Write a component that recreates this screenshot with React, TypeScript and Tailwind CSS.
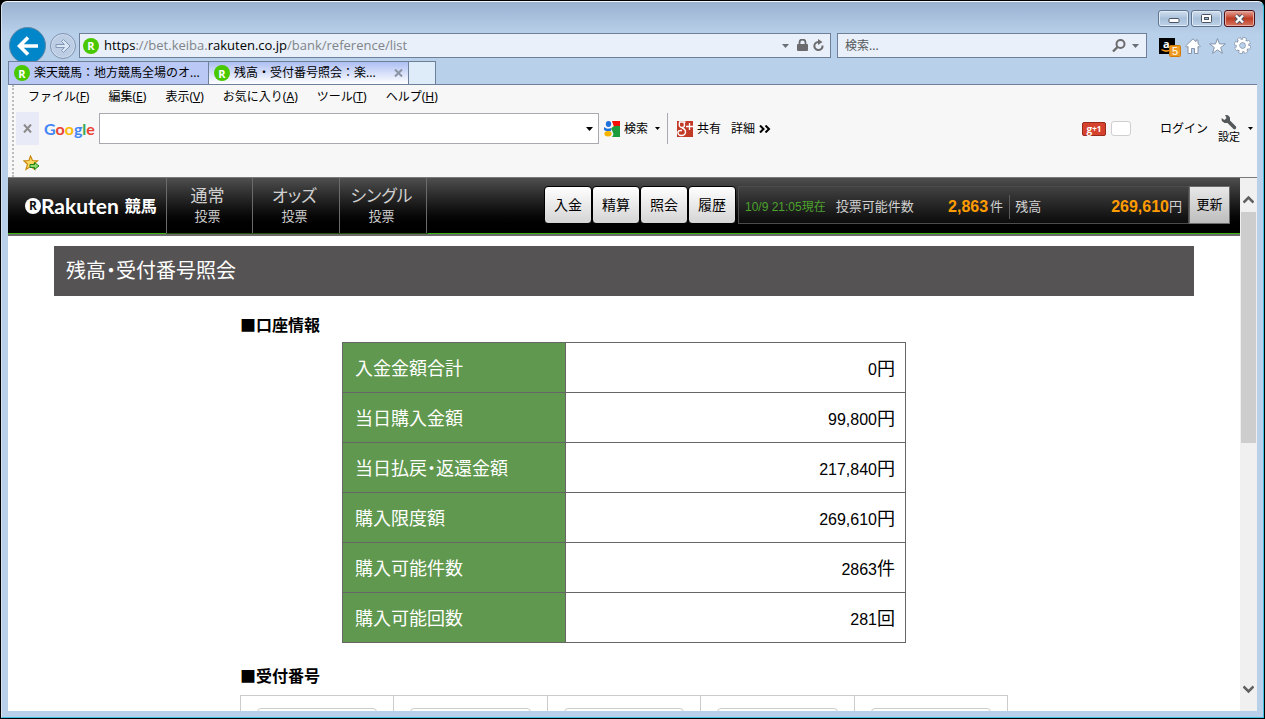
import React, { useState } from 'react';

const MENUS = [
  { label: 'ファイル', key: 'F' },
  { label: '編集', key: 'E' },
  { label: '表示', key: 'V' },
  { label: 'お気に入り', key: 'A' },
  { label: 'ツール', key: 'T' },
  { label: 'ヘルプ', key: 'H' },
];

const NAV_ITEMS = ['通常', 'オッズ', 'シングル'];

const ACTIONS = ['入金', '精算', '照会', '履歴'];

const ACCOUNT_ROWS = [
  { label: '入金金額合計', value: '0', unit: '円' },
  { label: '当日購入金額', value: '99,800', unit: '円' },
  { label: '当日払戻・返還金額', value: '217,840', unit: '円' },
  { label: '購入限度額', value: '269,610', unit: '円' },
  { label: '購入可能件数', value: '2863', unit: '件' },
  { label: '購入可能回数', value: '281', unit: '回' },
];

function Caret({ className }: { className: string }) {
  return (
    <svg viewBox="0 0 7 4" className={`h-1 w-[7px] shrink-0 ${className}`} fill="currentColor">
      <path d="M0 0h7L3.5 4z" />
    </svg>
  );
}

function SiteIcon() {
  return (
    <span className="flex size-4 shrink-0 items-center justify-center rounded-full bg-[#49c800] font-['Open_Sans','Noto_Sans',sans-serif] text-[11px] leading-none font-bold text-white">
      R
    </span>
  );
}

function WindowButtons() {
  const base =
    'flex h-[17px] w-[31px] items-center justify-center rounded-[3px] border border-[#5f7491] bg-linear-to-b from-[#d3e0ef] via-[#a9c0da] to-[#bed3ea] shadow-[inset_0_0_0_1px_#e2ecf7]';
  return (
    <div className="mr-0.5 flex h-[31px] shrink-0 justify-end gap-0.5 pt-2">
      <button type="button" aria-label="最小化" className={base}>
        <svg width="12" height="9" viewBox="0 0 12 9">
          <rect x="1" y="4.5" width="10" height="4" rx="1" fill="#fff" stroke="#4a5361" />
        </svg>
      </button>
      <button type="button" aria-label="最大化" className={base}>
        <svg width="11" height="9" viewBox="0 0 11 9">
          <rect x="0.5" y="0.5" width="10" height="8" rx="1" fill="#fff" stroke="#4a5361" />
          <rect x="3.5" y="3.5" width="4" height="2" fill="#9db4d0" stroke="#4a5361" />
        </svg>
      </button>
      <button
        type="button"
        aria-label="閉じる"
        className="flex h-[17px] w-[31px] items-center justify-center rounded-[3px] border border-[#4d0f15] bg-linear-to-b from-[#e5a398] via-[#bd3a23] to-[#d57560] shadow-[inset_0_0_0_1px_#e6b0a6]"
      >
        <svg width="13" height="10" viewBox="0 0 13 10">
          <path d="M3 1.5l7 7M10 1.5l-7 7" stroke="#535666" strokeWidth="4.4" />
          <path d="M3 1.5l7 7M10 1.5l-7 7" stroke="#fff" strokeWidth="2.4" />
        </svg>
      </button>
    </div>
  );
}

function AddressRow() {
  return (
    <div className="flex h-7 shrink-0 items-start">
      <button
        type="button"
        aria-label="戻る"
        className="-mt-1.5 ml-px flex size-[37px] shrink-0 items-center justify-center rounded-full border border-[#5f86a8] bg-[#0086c9]"
      >
        <svg width="22" height="20" viewBox="0 0 22 20" fill="none" stroke="#fff" strokeWidth="3.6">
          <path d="M21 10H3M11 1.5L2.5 10l8.500 8.500" />
        </svg>
      </button>
      <button
        type="button"
        aria-label="進む"
        className="ml-1 flex size-[26px] shrink-0 items-center justify-center rounded-full border border-[#7f93b0] bg-[#bccde4] shadow-[inset_0_0_0_1px_#d3e0f0]"
      >
        <svg width="16" height="14" viewBox="0 0 16 14">
          <path d="M1 5.500h8.500L6.500 2.500l2-2L15 7l-6.500 6.500-2-2 3-3H1z" fill="#dbe7f5" stroke="#8297b5" />
        </svg>
      </button>
      <div className="ml-[3px] flex h-[25px] flex-1 items-center border border-[#6d7f99] bg-[#e9f0fa] pr-1.5 pl-[3px]">
        <SiteIcon />
        <p className="ml-[5px] flex-1 font-['Open_Sans','Noto_Sans',sans-serif] text-[13px] whitespace-nowrap text-[#808488]">
          <span className="text-black">https</span>://bet.keiba.<span className="text-black">rakuten.co.jp</span>
          /bank/reference/list
        </p>
        <Caret className="text-[#6b6f75]" />
        <svg width="11" height="13" viewBox="0 0 11 13" className="ml-2" fill="#6b6b6e">
          <rect x="0" y="5" width="11" height="7" rx="1" />
          <path d="M2.500 6V3.500a3 3 0 016 0V6" fill="none" stroke="#6b6b6e" strokeWidth="1.800" />
        </svg>
        <svg width="11" height="13" viewBox="0 0 11 13" className="ml-[5px]" fill="none">
          <path d="M9.500 6.500a4.100 4.100 0 11-4-3.600" stroke="#6b6b6e" strokeWidth="2" />
          <path d="M5 0v6L9.500 3z" fill="#6b6b6e" />
        </svg>
      </div>
      <div className="ml-1.5 flex h-[25px] w-[310px] items-center border border-[#6d7f99] bg-[#e9f0fa] px-[7px]">
        <input
          aria-label="検索"
          placeholder="検索..."
          className="min-w-0 flex-1 bg-transparent text-xs outline-none placeholder:text-[#55585c]"
        />
        <svg width="14" height="14" viewBox="0 0 14 14" fill="none" stroke="#6b6b6e" strokeWidth="2">
          <circle cx="8.500" cy="5" r="4" />
          <path d="M5.500 8L1 12.500" strokeWidth="2.400" />
        </svg>
        <Caret className="ml-1.5 text-[#6b6f75]" />
      </div>
      <div className="mr-1.5 ml-3 flex h-[25px] items-center gap-2">
        <button type="button" aria-label="Amazon" className="-mr-1 size-[22px]">
          <svg width="22" height="22" viewBox="0 0 22 22">
            <rect x="0" y="3" width="16" height="16" fill="#000" />
            <path d="M2.500 14.500q5 3.500 10-.5" fill="none" stroke="#f79a1e" strokeWidth="1.500" />
            <text x="4" y="13" fill="#fff" fontSize="11" fontWeight="700" fontFamily="Open Sans, sans-serif">
              a
            </text>
            <rect x="10.500" y="10.500" width="11" height="11" rx="1" fill="#ee9a20" stroke="#d27a08" />
            <text x="13" y="20" fill="#fff" fontSize="11" fontFamily="Liberation Sans, sans-serif">
              5
            </text>
          </svg>
        </button>
        <button type="button" aria-label="ホーム">
          <svg width="16" height="16" viewBox="0 0 16 16" fill="#fff" stroke="#8594aa" strokeWidth="1">
            <path d="M8 .8L.6 8l1.200 1.300 1.200-.9V15.500h3.500v-5h3v5H13V8.400l1.200.9L15.400 8 13 5.700V2h-2v1.700z" />
          </svg>
        </button>
        <button type="button" aria-label="お気に入り">
          <svg width="17" height="16" viewBox="0 0 17 16" fill="#fff" stroke="#8594aa" strokeWidth="1">
            <path d="M8.500.6l2 5.300h5.900l-4.700 3.600 1.800 5.900-5-3.500-5 3.500 1.800-5.900L.6 5.900h5.900z" />
          </svg>
        </button>
        <button type="button" aria-label="ツール">
          <svg width="17" height="17" viewBox="0 0 17 17" fill="none">
            <circle cx="8.500" cy="8.500" r="6.700" stroke="#8594aa" strokeWidth="3.400" strokeDasharray="3.600 1.660" />
            <circle cx="8.500" cy="8.500" r="4.700" stroke="#8594aa" strokeWidth="4.400" />
            <circle cx="8.500" cy="8.500" r="6.600" stroke="#fff" strokeWidth="2.400" strokeDasharray="2.600 2.580" strokeDashoffset="-.5" />
            <circle cx="8.500" cy="8.500" r="4.600" stroke="#fff" strokeWidth="2.800" />
          </svg>
        </button>
      </div>
    </div>
  );
}

function TabRow() {
  return (
    <div className="relative flex h-6 shrink-0 border-b border-[#6d7f99] text-xs">
      <button
        type="button"
        className="flex w-[200px] items-center gap-1 border-t border-l border-[#6d7f99] bg-[#b9c8f4] pl-[5px] whitespace-nowrap"
      >
        <SiteIcon />
        楽天競馬：地方競馬全場のオ...
      </button>
      <div className="flex w-[201px] items-center border border-b-0 border-[#6d7f99] bg-linear-to-b from-[#aebff2] to-white px-[5px]">
        <button type="button" className="flex flex-1 items-center gap-1 whitespace-nowrap">
          <SiteIcon />
          残高・受付番号照会：楽...
        </button>
        <button type="button" aria-label="タブを閉じる">
          <svg width="9" height="8" viewBox="0 0 9 8" stroke="#8b93a3" strokeWidth="2">
            <path d="M1 .5l7 7M8 .5l-7 7" />
          </svg>
        </button>
      </div>
      <button
        type="button"
        aria-label="新しいタブ"
        className="w-[27px] border-t border-r border-[#6d7f99] bg-[#deebf9]"
      />
    </div>
  );
}

function GoogleLogo() {
  return (
    <span className="ml-[5px] w-[51px] font-[Lato,'Open_Sans',sans-serif] text-base font-bold">
      <span className="text-[#4285f4]">G</span>
      <span className="text-[#ea4335]">o</span>
      <span className="text-[#fbbc05]">o</span>
      <span className="text-[#4285f4]">g</span>
      <span className="text-[#34a853]">l</span>
      <span className="text-[#ea4335]">e</span>
    </span>
  );
}

function Toolbars() {
  return (
    <div className="h-[92px] shrink-0 bg-[#f7f7f7] pl-1 text-xs">
      <div className="h-full border-l-2 border-dotted border-[#bdbdbd]">
        <div className="flex h-[27px] items-start gap-[19px] pt-1 pl-3.5 leading-4">
          {MENUS.map((menu) => (
            <button type="button" key={menu.key} className="whitespace-nowrap">
              {menu.label}(<span className="underline">{menu.key}</span>)
            </button>
          ))}
        </div>
        <div className="flex h-[33px] items-center">
          <button
            type="button"
            aria-label="ツールバーを閉じる"
            className="ml-0.5 flex h-[33px] w-[23px] items-center justify-center bg-[#e8ebf7]"
          >
            <svg width="9" height="9" viewBox="0 0 9 9" stroke="#8c8c8c" strokeWidth="2">
              <path d="M1 .5l7 8M8 .5l-7 8" />
            </svg>
          </button>
          <GoogleLogo />
          <div className="ml-1 flex h-[31px] w-[500px] items-center border border-[#a9a9b0] bg-white pr-[5px]">
            <input aria-label="Google 検索" className="h-full min-w-0 flex-1 px-2 outline-none" />
            <Caret className="text-black" />
          </div>
          <button type="button" className="ml-[5px] flex items-center gap-1">
            <svg width="16" height="16" viewBox="0 0 16 16">
              <path d="M8 0h8v6H10z" fill="#f60d05" />
              <path d="M7 8q2-4 9-3v11H8q3-3-1-8z" fill="#1c9c3c" />
              <ellipse cx="4.500" cy="3" rx="2.700" ry="3" fill="#1f72dd" />
              <path d="M0 6q3 3 7 1v3q-4 1-7-1z" fill="#1f72dd" />
              <ellipse cx="4" cy="12.800" rx="3.600" ry="2.700" fill="#f7b500" />
            </svg>
            検索
          </button>
          <svg width="5" height="3" viewBox="0 0 5 3" className="ml-[7px]">
            <path d="M0 0h5L2.500 3z" />
          </svg>
          <span className="mx-[7px] h-[31px] w-px bg-[#a9a9b0]" />
          <button type="button" className="ml-0.5 flex items-center gap-1">
            <svg width="16" height="16" viewBox="0 0 16 16" fill="none" stroke="#fff">
              <rect width="16" height="16" fill="#c23b27" stroke="none" />
              <path d="M2 1h6.500M7 1.500q1.500 5-2 5T2.500 1.500M5 7q3.500 1 3.500 4T5 14.500 1 12t4-2.500" strokeWidth="1.400" />
              <path d="M12.500 2v7M9 5.500h7" strokeWidth="1.300" />
            </svg>
            共有
          </button>
          <button type="button" className="ml-2.5 flex items-center gap-1">
            詳細
            <svg width="12" height="8" viewBox="0 0 12 8" fill="none" stroke="#000" strokeWidth="2">
              <path d="M1 .5L4.500 4 1 7.500M6.500 .5L10 4 6.500 7.500" />
            </svg>
          </button>
          <div className="mr-1 ml-auto flex items-center">
            <button
              type="button"
              className="flex h-3.5 w-6 items-center justify-center rounded-[2px] border border-[#9a2a1c] bg-[#d5432f] font-['Open_Sans','Noto_Sans',sans-serif] text-[10px] leading-none font-bold text-white"
            >
              g<span className="text-[8px]">+1</span>
            </button>
            <span className="ml-[5px] h-[15px] w-5 rounded-[3px] border border-[#cfcfcf] bg-white" />
            <button type="button" className="ml-[29px]">
              ログイン
            </button>
            <button type="button" className="ml-2.5 flex flex-col items-center gap-px leading-3">
              <svg width="16" height="15" viewBox="0 0 16 15">
                <path
                  d="M4 0l3 .3L9 2.500v3l6 6q.8 1.600-.5 2.500-1 .8-2 0L6.500 8 3.500 8 .8 6 .5 3l3 2L5.500 3z"
                  fill="#55585a"
                />
              </svg>
              <span className="text-[11px]">設定</span>
            </button>
            <svg width="5" height="3" viewBox="0 0 5 3" className="ml-2">
              <path d="M0 0h5L2.500 3z" />
            </svg>
          </div>
        </div>
        <div className="flex h-8 items-center pl-[9px]">
          <button type="button" aria-label="お気に入りバーに追加">
            <svg width="17" height="16" viewBox="0 0 17 16" className="mt-1">
              <path
                d="M7.500 1l2 4.500 5 .3-4 3.400 1.300 5.200-4.300-2.800-4.500 2.800 1.500-5.200L1 5.800l5-.3z"
                fill="#ffd862"
                stroke="#c88a10"
                strokeWidth="1.200"
              />
              <path d="M7 9.500h4.500v-2l4.500 3.500-4.500 3.500v-2H7z" fill="#8fdc6c" stroke="#23821a" />
            </svg>
          </button>
        </div>
      </div>
    </div>
  );
}

function SiteHeader() {
  return (
    <header className="flex h-[58px] border-b-2 border-[#6a6a6a] text-[13px] whitespace-nowrap text-[#d0d0d0]">
      <div className="flex flex-1 border-b border-[#36b30c] bg-linear-to-b from-[#4f4f4f] to-black">
        <a href="#" className="flex w-[158px] items-center pl-[17px] text-white">
          <svg width="16" height="16" viewBox="0 0 16 16">
            <circle cx="8" cy="8" r="8" fill="#fff" />
            <text x="4" y="12" fontSize="12" fontWeight="700" fill="#111" fontFamily="Open Sans, sans-serif">
              R
            </text>
          </svg>
          <span className="font-[Lato,'Open_Sans',sans-serif] text-[21px] font-bold">Rakuten</span>
          <span className="ml-1.5 text-base font-bold">競馬</span>
        </a>
        <nav className="-mb-px flex border-b border-l border-b-[#24500f] border-l-[#6b6b6b]">
          {NAV_ITEMS.map((item) => (
            <a
              href="#"
              key={item}
              className="mr-px flex w-[86px] flex-col items-center border-r border-[#6b6b6b] pt-2 pr-1 leading-5"
            >
              <span className="text-[17px] [font-feature-settings:'palt']">{item}</span>
              <span>投票</span>
            </a>
          ))}
        </nav>
        <div className="mt-2 mr-2.5 ml-auto flex h-[38px]">
          {ACTIONS.map((action) => (
            <button
              type="button"
              key={action}
              className="w-12 rounded-[4px] border border-black bg-linear-to-b from-white to-[#d4d4d4] text-sm text-black"
            >
              {action}
            </button>
          ))}
          <div className="ml-0.5 flex w-[451px] items-center border border-[#4c4c4c] bg-linear-to-b from-[#424242] to-[#0c0c0c] px-1.5 pt-1">
            <span className="font-['Liberation_Sans','Noto_Sans_CJK_JP',sans-serif] text-xs text-[#4ca32c]">
              10/9 21:05現在
            </span>
            <span className="ml-2.5">投票可能件数</span>
            <span className="ml-auto font-['Liberation_Sans',sans-serif] text-base font-bold text-[#ff9c00]">
              2,863
            </span>
            <span className="ml-0.5">件</span>
            <span className="mr-[5px] ml-1.5 h-6 w-px bg-[#5c5c5c]" />
            <span>残高</span>
            <span className="ml-[70px] font-['Liberation_Sans',sans-serif] text-base font-bold text-[#ff9c00]">
              269,610
            </span>
            <span>円</span>
          </div>
          <button
            type="button"
            className="w-[41px] border border-[#6b6b6b] bg-linear-to-b from-[#e8e8e8] to-[#bdbdbd] text-black"
          >
            更新
          </button>
        </div>
      </div>
    </header>
  );
}

function AccountTable() {
  return (
    <table className="mx-auto w-[564px] border-collapse text-lg">
      <tbody>
        {ACCOUNT_ROWS.map((row) => (
          <tr key={row.label} className="h-[50px]">
            <th
              scope="row"
              className="w-[223px] border border-[#666] bg-[#5f984e] px-3 text-left font-normal text-white [font-feature-settings:'palt']"
            >
              {row.label}
            </th>
            <td className="border border-[#666] bg-white px-2.5 text-right text-black">
              <span className="font-['Liberation_Sans',sans-serif] text-base">{row.value}</span>
              {row.unit}
            </td>
          </tr>
        ))}
      </tbody>
    </table>
  );
}

function ReceiptTable() {
  const [selected, setSelected] = useState<number | null>(null);

  return (
    <table className="w-full table-fixed border-collapse">
      <tbody>
        <tr>
          {[0, 1, 2, 3, 4].map((n) => (
            <td key={n} className="border border-[#ccc] px-4 py-3">
              <button
                type="button"
                aria-label={`受付番号 ${n + 1}`}
                aria-pressed={selected === n}
                onClick={() => setSelected(n)}
                className="block h-9 w-full rounded-[4px] border border-[#ccc]"
              />
            </td>
          ))}
        </tr>
      </tbody>
    </table>
  );
}

function ScrollBar() {
  return (
    <div className="flex w-[17px] shrink-0 flex-col bg-[#f0f0f0] px-px">
      <button type="button" aria-label="上へ" className="flex h-[34px] items-end justify-center pb-2">
        <svg width="11" height="9" viewBox="0 0 11 9" fill="none" stroke="#606060" strokeWidth="2.600">
          <path d="M.5 7.500l5-5 5 5" />
        </svg>
      </button>
      <div className="h-[231px] bg-[#cdcdcd]" />
      <button type="button" aria-label="下へ" className="mt-auto flex h-[26px] items-start justify-center">
        <svg width="11" height="9" viewBox="0 0 11 9" fill="none" stroke="#606060" strokeWidth="2.600">
          <path d="M.5 1.500l5 5 5-5" />
        </svg>
      </button>
    </div>
  );
}

export default function App() {
  return (
    <div className="h-screen overflow-hidden bg-black p-px font-['Noto_Sans','Noto_Sans_CJK_JP',sans-serif] text-black">
      <div className="flex h-full flex-col overflow-hidden rounded-t-md border border-t-[#f3f7fb] border-r-[#3fc0e0] border-b-[#3fc0e0] border-l-[#d5e2f1] bg-[#b9d0ea] bg-[linear-gradient(#9ab2d0,#b9d0ea_32px)] px-1.5 pb-1.5">
        <WindowButtons />
        <AddressRow />
        <TabRow />
        <Toolbars />
        <div className="flex min-h-0 flex-1 border-t border-[#7a7a7a] bg-white">
          <main className="min-w-0 flex-1 overflow-hidden">
            <SiteHeader />
            <h1 className="mx-[46px] mt-2.5 h-[50px] bg-[#565354] px-3 text-xl leading-[50px] text-white [font-feature-settings:'palt']">
              残高・受付番号照会
            </h1>
            <section className="mx-auto max-w-[768px]">
              <h2 className="mt-4 mb-1 text-base leading-[26px] font-bold">■口座情報</h2>
              <AccountTable />
              <h2 className="mt-5 mb-1.5 text-base leading-[26px] font-bold">■受付番号</h2>
              <ReceiptTable />
            </section>
          </main>
          <ScrollBar />
        </div>
      </div>
    </div>
  );
}
